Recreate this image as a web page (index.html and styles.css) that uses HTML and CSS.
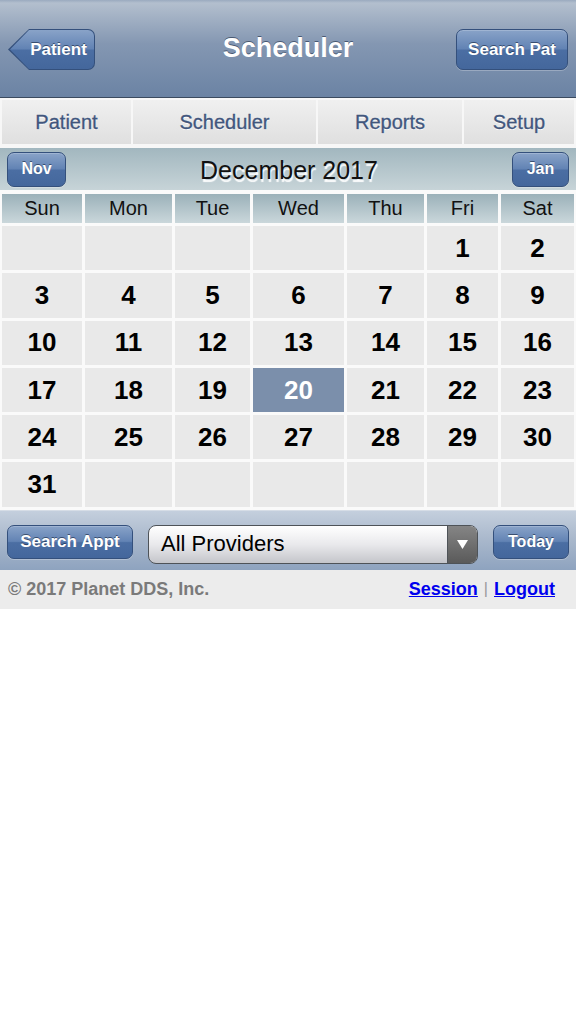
FILE: index.html
```html
<!DOCTYPE html>
<html lang="en">
<head>
  <meta charset="UTF-8">
  <meta name="viewport" content="width=device-width, initial-scale=1.0">
  <title>Scheduler | Planet DDS</title>
  <link rel="stylesheet" href="styles.css">
</head>
<body>
  <div class="header">
    <div class="header-left">
      <a class="back-btn"><span class="back-btn-face">Patient</span></a>
    </div>
    <h1 class="title">Scheduler</h1>
    <div class="header-right">
      <a class="btn">Search Pat</a>
    </div>
  </div>

  <div class="tabs">
    <a class="tab">Patient</a>
    <a class="tab">Scheduler</a>
    <a class="tab">Reports</a>
    <a class="tab">Setup</a>
  </div>

  <div class="month-bar">
    <a class="btn btn-small">Nov</a>
    <div class="month-title">December 2017</div>
    <a class="btn btn-small">Jan</a>
  </div>

  <div class="calendar">
    <div class="day-name">Sun</div>
    <div class="day-name">Mon</div>
    <div class="day-name">Tue</div>
    <div class="day-name">Wed</div>
    <div class="day-name">Thu</div>
    <div class="day-name">Fri</div>
    <div class="day-name">Sat</div>

    <div class="day"></div>
    <div class="day"></div>
    <div class="day"></div>
    <div class="day"></div>
    <div class="day"></div>
    <div class="day">1</div>
    <div class="day">2</div>

    <div class="day">3</div>
    <div class="day">4</div>
    <div class="day">5</div>
    <div class="day">6</div>
    <div class="day">7</div>
    <div class="day">8</div>
    <div class="day">9</div>

    <div class="day">10</div>
    <div class="day">11</div>
    <div class="day">12</div>
    <div class="day">13</div>
    <div class="day">14</div>
    <div class="day">15</div>
    <div class="day">16</div>

    <div class="day">17</div>
    <div class="day">18</div>
    <div class="day">19</div>
    <div class="day today">20</div>
    <div class="day">21</div>
    <div class="day">22</div>
    <div class="day">23</div>

    <div class="day">24</div>
    <div class="day">25</div>
    <div class="day">26</div>
    <div class="day">27</div>
    <div class="day">28</div>
    <div class="day">29</div>
    <div class="day">30</div>

    <div class="day">31</div>
    <div class="day"></div>
    <div class="day"></div>
    <div class="day"></div>
    <div class="day"></div>
    <div class="day"></div>
    <div class="day"></div>
  </div>

  <div class="toolbar">
    <a class="btn btn-appt">Search Appt</a>
    <div class="select">
      <span class="select-text">All Providers</span>
      <span class="select-arrow">
        <svg width="11" height="9" viewBox="0 0 11 9"><path d="M0 0 H11 L5.5 9 Z" fill="#ffffff"/></svg>
      </span>
    </div>
    <a class="btn btn-today">Today</a>
  </div>

  <div class="footer">
    <span class="copyright">&copy; 2017 Planet DDS, Inc.</span>
    <span class="links">
      <a href="#" class="link">Session</a>
      <span class="sep">|</span>
      <a href="#" class="link">Logout</a>
    </span>
  </div>
</body>
</html>
```

FILE: styles.css
```css
body {
  margin: 0;
  font-family: "Liberation Sans", Arial, sans-serif;
  background-color: #ffffff;
  color: #000000;
}

a {
  cursor: pointer;
}

/* Top navigation bar */
.header {
  display: grid;
  grid-template-columns: 1fr auto 1fr;
  align-items: center;
  height: 97px;
  padding: 0 8px;
  background: linear-gradient(to bottom, #9aaabf 0px, #b3bfce 3px, #8497b2 45%, #6b83a4 100%);
  border-bottom: 1px solid #3b4a5f;
}

.header-left {
  display: flex;
  justify-content: flex-start;
  padding-top: 2px;
}

.header-right {
  display: flex;
  justify-content: flex-end;
  padding-top: 2px;
}

.title {
  margin: 0;
  font-size: 27px;
  font-weight: bold;
  color: #ffffff;
  text-shadow: 0 -1px 0 rgba(30, 45, 70, 0.6);
}

.btn {
  display: inline-flex;
  align-items: center;
  justify-content: center;
  box-sizing: border-box;
  height: 41px;
  padding: 0 11px;
  border: 1px solid #34507c;
  border-radius: 7px;
  background: linear-gradient(to bottom, #89a3c8 0%, #6283b4 48%, #4b6ea3 52%, #44679c 100%);
  box-shadow: 0 1px 0 rgba(255, 255, 255, 0.25), inset 0 1px 0 rgba(255, 255, 255, 0.2);
  color: #ffffff;
  font-size: 17px;
  font-weight: bold;
  text-shadow: 0 -1px 0 rgba(20, 35, 60, 0.6);
  white-space: nowrap;
}

.back-btn {
  display: block;
  width: 87px;
  height: 41px;
  background: #34507c;
  border-radius: 0 7px 7px 0;
  clip-path: polygon(21px 0, 100% 0, 100% 100%, 21px 100%, 0 50%);
}

.back-btn-face {
  display: flex;
  align-items: center;
  justify-content: center;
  box-sizing: border-box;
  height: 39px;
  margin: 1px;
  padding-left: 14px;
  border-radius: 0 6px 6px 0;
  background: linear-gradient(to bottom, #89a3c8 0%, #6283b4 48%, #4b6ea3 52%, #44679c 100%);
  clip-path: polygon(20px 0, 100% 0, 100% 100%, 20px 100%, 1px 50%);
  color: #ffffff;
  font-size: 17px;
  font-weight: bold;
  text-shadow: 0 -1px 0 rgba(20, 35, 60, 0.6);
}

/* Section tabs */
.tabs {
  display: grid;
  grid-template-columns: 129px 183px 144px 110px;
  gap: 2px;
  padding: 2px 2px 4px;
  background: #f7f7f7;
}

.tab {
  display: flex;
  align-items: center;
  justify-content: center;
  height: 44px;
  background: linear-gradient(to bottom, #f0f0f0, #dfdfdf);
  color: #41567d;
  font-size: 20px;
  text-shadow: 0 1px 0 #ffffff;
  -webkit-text-stroke: 0.3px #41567d;
}

/* Month switcher */
.month-bar {
  display: flex;
  align-items: center;
  justify-content: space-between;
  height: 42px;
  padding: 0 7px;
  background: linear-gradient(to bottom, #a2b7bf, #c7d4d8);
}

.btn-small {
  height: 35px;
  padding: 0;
  width: 59px;
  font-size: 16px;
}

.month-bar .btn-small:last-child {
  width: 57px;
}

.month-title {
  padding-top: 2px;
  font-size: 25px;
  color: #111111;
  text-shadow: 1px 3px 1px rgba(255, 255, 255, 0.95);
}

/* Calendar grid */
.calendar {
  display: grid;
  grid-template-columns: 80px 87px 75px 91px 77px 71px 73px;
  grid-template-rows: 29px repeat(6, 44.3px);
  column-gap: 3px;
  row-gap: 3px;
  padding: 4px 2px 3px;
  background: #fafafa;
}

.day-name {
  display: flex;
  align-items: center;
  justify-content: center;
  background: linear-gradient(to bottom, #9bb1b9, #cad7db);
  font-size: 20px;
  color: #111111;
}

.day {
  display: flex;
  align-items: center;
  justify-content: center;
  background: #e9e9e9;
  font-size: 26px;
  font-weight: bold;
  color: #000000;
}

.day.today {
  background: #7b8fab;
  color: #ffffff;
}

/* Bottom toolbar */
.toolbar {
  display: flex;
  align-items: flex-start;
  gap: 15px;
  height: 45px;
  padding: 14px 7px 0;
  background: linear-gradient(to bottom, #c4cfdd 0%, #a8b7cb 50%, #8ea3bf 100%);
  border-top: 1px solid #d6dde6;
}

.btn-appt {
  width: 126px;
  height: 34px;
  padding: 0;
}

.btn-today {
  width: 76px;
  height: 34px;
  padding: 0;
  font-size: 16px;
}

.select {
  display: flex;
  box-sizing: border-box;
  width: 330px;
  height: 39px;
  border: 1px solid #4e5358;
  border-radius: 8px;
  overflow: hidden;
  background: linear-gradient(to bottom, #ffffff 0%, #e9e9ec 50%, #c4c5ca 100%);
}

.select-text {
  flex: 1;
  display: flex;
  align-items: center;
  padding-left: 12px;
  font-size: 22px;
  color: #000000;
}

.select-arrow {
  display: flex;
  align-items: center;
  justify-content: center;
  width: 29px;
  border-left: 1px solid #4e5358;
  background: linear-gradient(to bottom, #858585, #5a5a5a);
}

/* Footer */
.footer {
  display: flex;
  align-items: center;
  justify-content: space-between;
  height: 39px;
  padding: 0 21px 0 8px;
  background: #ececec;
  font-size: 18px;
  font-weight: bold;
}

.copyright {
  color: #7a7a7a;
}

.links {
  display: flex;
  align-items: center;
  gap: 6px;
}

.link {
  color: #0000ee;
}

.sep {
  color: #9a9a9a;
  font-weight: normal;
  font-size: 16px;
}
```
